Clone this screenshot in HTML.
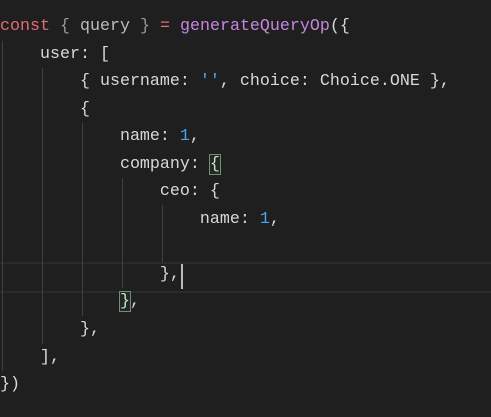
<!DOCTYPE html><html><head><style>
body{margin:0;width:491px;height:417px;background:#1f1f1f;overflow:hidden;position:relative}
pre{margin:0;position:absolute;left:0;top:13px;font-family:"Liberation Mono",monospace;font-size:16.67px;line-height:27.55px;color:#d8d8d8}
.k{color:#e06c75}.p{color:#9a9a9a}.q{color:#bdbdbd}.f{color:#c586e0}.n{color:#4fa3e8}.s{color:#4fa3e8}
.g{position:absolute;width:1px;background:#404040}
.m{outline:1px solid #7a8a7a;background:#1e2b20}
</style></head><body>
<div style="position:absolute;left:0;right:0;top:262px;height:27px;border-top:2px solid #2a2a2a;border-bottom:2px solid #2a2a2a"></div>
<div class="g" style="left:2px;top:41px;height:330px"></div>
<div class="g" style="left:42px;top:68px;height:276px"></div>
<div class="g" style="left:82px;top:123px;height:193px"></div>
<div class="g" style="left:122px;top:178px;height:110px"></div>
<div class="g" style="left:162px;top:205px;height:58px"></div>
<div style="position:absolute;left:181px;top:264px;width:2px;height:25px;background:#bbb"></div>
<pre><span class="k">const</span> <span class="p">{</span> <span class="q">query</span> <span class="p">}</span> <span class="k">=</span> <span class="f">generateQueryOp</span>({
    user: [
        { username: <span class="s">''</span>, choice: Choice.ONE },
        {
            name: <span class="n">1</span>,
            company: <span class="m">{</span>
                ceo: {
                    name: <span class="n">1</span>,

                },
            <span class="m">}</span>,
        },
    ],
})</pre>
</body></html>
